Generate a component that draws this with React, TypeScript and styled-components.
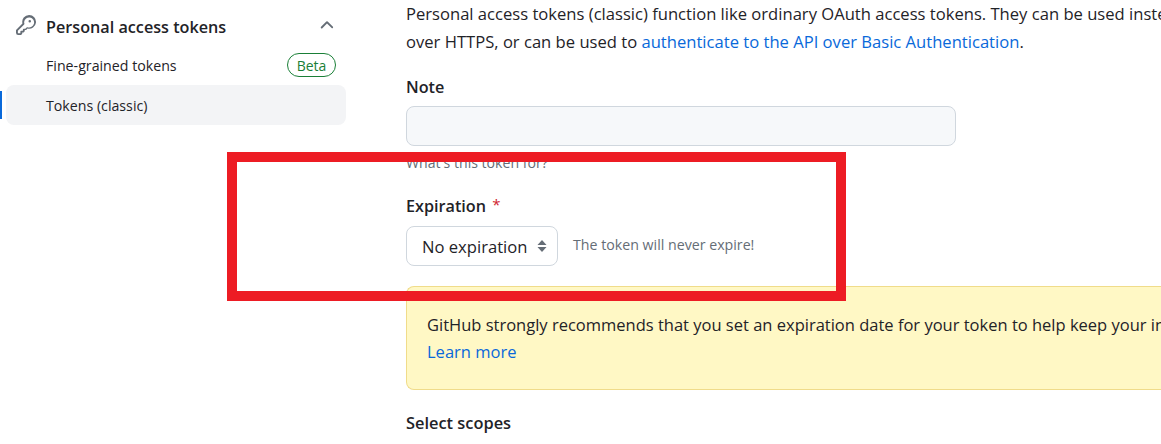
import React from "react";
import styled, { createGlobalStyle } from "styled-components";

const GlobalStyle = createGlobalStyle`
  html, body {
    margin: 0;
    padding: 0;
    background: #ffffff;
    overflow: hidden;
  }
  body {
    font-family: "Open Sans", "Noto Sans", sans-serif;
    color: #1f2328;
  }
`;

const KeyIcon = () => (
  <svg width="20" height="20" viewBox="0 0 16 16" fill="currentColor">
    <path d="M10.5 0a5.499 5.499 0 1 1-1.288 10.848l-.932.932a.749.749 0 0 1-.53.22H7v.75a.749.749 0 0 1-.22.53l-.5.5a.749.749 0 0 1-.53.22H5v.75a.749.749 0 0 1-.22.53l-.5.5a.749.749 0 0 1-.53.22h-2A1.75 1.75 0 0 1 0 14.25v-2c0-.199.079-.389.22-.53l4.932-4.932A5.5 5.5 0 0 1 10.5 0Zm-4 5.5c-.001.431.069.86.205 1.269a.75.75 0 0 1-.181.768L1.5 12.56v1.69c0 .138.112.25.25.25h1.69l.06-.06v-1.19a.75.75 0 0 1 .75-.75h1.19l.06-.06v-.69a.75.75 0 0 1 .75-.75h1.19l1.023-1.025a.75.75 0 0 1 .768-.18A4 4 0 1 0 6.5 5.5ZM11 6a1 1 0 1 1 0-2 1 1 0 0 1 0 2Z" />
  </svg>
);

const ChevronUp = () => (
  <svg width="20" height="20" viewBox="0 0 16 16" fill="currentColor">
    <path d="M3.22 10.53a.749.749 0 0 1 0-1.06l4.25-4.25a.749.749 0 0 1 1.06 0l4.25 4.25a.749.749 0 0 1-1.042 1.018.749.749 0 0 1-.018-.018L8 6.81 4.28 10.53a.75.75 0 0 1-1.06 0Z" />
  </svg>
);

const SelectArrows = () => (
  <svg width="10" height="14" viewBox="0 0 10 14" fill="currentColor">
    <path d="M5 1 L9.5 6 H0.5 Z" />
    <path d="M5 13 L0.5 8 H9.5 Z" />
  </svg>
);

export default function App() {
  return (
    <>
      <GlobalStyle />
      <Page>
        <Sidebar>
          <NavHeader>
            <KeyHold>
              <KeyIcon />
            </KeyHold>
            <NavTitle>Personal access tokens</NavTitle>
            <ChevronHold>
              <ChevronUp />
            </ChevronHold>
          </NavHeader>
          <NavItem>
            Fine-grained tokens
            <Badge>Beta</Badge>
          </NavItem>
          <NavItem $active>Tokens (classic)</NavItem>
        </Sidebar>
        <Main>
          <Intro>
            Personal access tokens (classic) function like ordinary OAuth access tokens. They can be used instead of a password for Git
            <br />
            over HTTPS, or can be used to <Link>authenticate to the API over Basic Authentication</Link>.
          </Intro>
          <Label $top={18}>Note</Label>
          <NoteInput />
          <Hint>What's this token for?</Hint>
          <Label $top={18}>
            Expiration <Required>*</Required>
          </Label>
          <SelectRow>
            <SelectBox>
              No expiration
              <ArrowHold>
                <SelectArrows />
              </ArrowHold>
            </SelectBox>
            <SelectNote>The token will never expire!</SelectNote>
          </SelectRow>
          <Banner>
            <BannerLine>
              GitHub strongly recommends that you set an expiration date for your token to help keep your information secure.
            </BannerLine>
            <BannerLine>
              <Link>Learn more</Link>
            </BannerLine>
          </Banner>
          <Scopes>Select scopes</Scopes>
        </Main>
        <Highlight />
      </Page>
    </>
  );
}

const Page = styled.div`
  position: relative;
  width: 1161px;
  height: 444px;
  display: flex;
  overflow: hidden;
`;

const Sidebar = styled.nav`
  flex: none;
  width: 340px;
  margin-left: 6px;
  padding-top: 7px;
`;

const NavHeader = styled.div`
  height: 40px;
  display: flex;
  align-items: center;
  padding: 0 4px 0 10px;
`;

const KeyHold = styled.span`
  display: flex;
  width: 30px;
  margin-top: -4px;
  color: #656d76;
`;

const NavTitle = styled.span`
  flex: 1;
  font-size: 16.2px;
  font-weight: 600;
  color: #1f2328;
`;

const ChevronHold = styled.span`
  display: flex;
  margin: -4px 5px 0 0;
  color: #656d76;
`;

const NavItem = styled.div<{ $active?: boolean }>`
  position: relative;
  height: 40px;
  box-sizing: border-box;
  display: flex;
  align-items: center;
  justify-content: space-between;
  padding: 0 10px ${(p) => (p.$active ? "0" : "2px")} 40px;
  margin-top: -1px;
  border-radius: 8px;
  font-size: 14.2px;
  color: #1f2328;
  background: ${(p) => (p.$active ? "#f3f4f6" : "transparent")};

  ${(p) =>
    p.$active &&
    `&::before {
      content: "";
      position: absolute;
      left: -6px;
      top: 6px;
      width: 2px;
      height: 28px;
      background: #0969da;
    }`}
`;

const Badge = styled.span`
  display: flex;
  align-items: center;
  justify-content: center;
  width: 49px;
  height: 24px;
  box-sizing: border-box;
  border: 1px solid #1a7f37;
  border-radius: 12px;
  font-size: 14px;
  color: #1a7f37;
`;

const Main = styled.main`
  flex: none;
  width: 755px;
  margin-left: 60px;
  white-space: nowrap;
`;

const Intro = styled.p`
  margin: 0;
  font-size: 16.6px;
  line-height: 28px;
  color: #1f2328;
`;

const Link = styled.a`
  color: #0969da;
`;

const Label = styled.div<{ $top: number }>`
  margin-top: ${(p) => p.$top}px;
  height: 26px;
  line-height: 26px;
  font-size: 16.2px;
  font-weight: 600;
  color: #1f2328;
`;

const Required = styled.span`
  margin-left: 2px;
  font-size: 15px;
  font-weight: 400;
  vertical-align: 2px;
  color: #cf222e;
`;

const NoteInput = styled.div`
  margin-top: 6px;
  width: 550px;
  height: 40px;
  box-sizing: border-box;
  background: #f6f8fa;
  border: 1px solid #d0d7de;
  border-radius: 8px;
`;

const Hint = styled.div`
  margin-top: 7px;
  height: 20px;
  line-height: 20px;
  font-size: 14.1px;
  color: #656d76;
`;

const SelectRow = styled.div`
  margin-top: 9px;
  display: flex;
  align-items: center;
  gap: 15px;
`;

const SelectBox = styled.div`
  width: 152px;
  height: 40px;
  box-sizing: border-box;
  display: flex;
  align-items: center;
  justify-content: space-between;
  padding: 0 10px 0 15px;
  background: #ffffff;
  border: 1px solid #d0d7de;
  border-radius: 8px;
  font-size: 16.6px;
  color: #1f2328;
`;

const ArrowHold = styled.span`
  display: flex;
  color: #656d76;
`;

const SelectNote = styled.span`
  margin-bottom: 4px;
  font-size: 14.2px;
  color: #656d76;
`;

const Banner = styled.div`
  margin-top: 20px;
  height: 104px;
  box-sizing: border-box;
  padding: 24px 20px 0;
  background: #fff8c5;
  border: 1px solid #f0dc8a;
  border-right: none;
  border-radius: 8px 0 0 8px;
`;

const BannerLine = styled.div`
  height: 27px;
  line-height: 27px;
  font-size: 16.5px;
`;

const Scopes = styled.div`
  margin-top: 20px;
  height: 26px;
  line-height: 26px;
  font-size: 16.4px;
  font-weight: 600;
`;

const Highlight = styled.div`
  position: absolute;
  left: 227px;
  top: 152px;
  width: 619px;
  height: 149px;
  box-sizing: border-box;
  border: 10px solid #ed1c24;
`;
